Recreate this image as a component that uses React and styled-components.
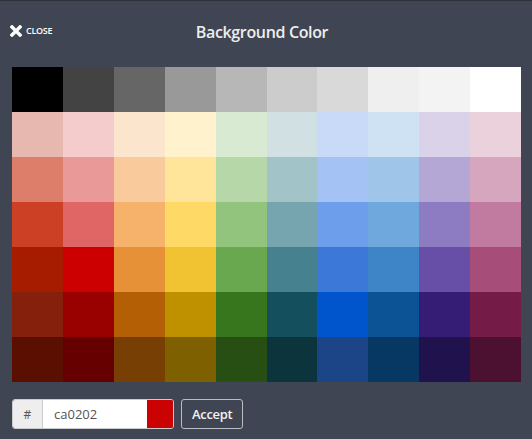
import styled, { createGlobalStyle } from "styled-components";

const GlobalStyle = createGlobalStyle`
  html, body {
    margin: 0;
    padding: 0;
    background: #3f4552;
    font-family: "Open Sans", "Liberation Sans", sans-serif;
  }
  * { box-sizing: border-box; }
`;

const Panel = styled.div`
  width: 532px;
  height: 439px;
  background: #3f4552;
  border-top: 1px solid #2d3139;
  padding: 0 11px 0 12px;
  display: flex;
  flex-direction: column;
`;

const Header = styled.div`
  height: 66px;
  padding-bottom: 4px;
  display: grid;
  grid-template-columns: 1fr auto 1fr;
  align-items: center;
`;

const CloseButton = styled.button`
  justify-self: start;
  display: flex;
  align-items: center;
  gap: 4px;
  margin: -3px 0 0 -2px;
  padding: 0;
  background: none;
  border: none;
  color: #ffffff;
  font-family: "Open Sans", "Liberation Sans", sans-serif;
  font-size: 9px;
  font-weight: 600;
  letter-spacing: -0.3px;
  cursor: pointer;
`;

const Title = styled.h1`
  margin: 0 9px 0 0;
  font-size: 16px;
  font-weight: 600;
  color: #eeeeee;
  letter-spacing: -0.35px;
`;

const Swatches = styled.div`
  width: 509px;
  display: grid;
  grid-template-columns: repeat(10, 1fr);
  grid-auto-rows: 45px;
`;

const Swatch = styled.div`
  background: ${(p) => p.$color};
  cursor: pointer;
`;

const Footer = styled.div`
  margin-top: 17px;
  display: flex;
  align-items: center;
  gap: 7px;
`;

const InputGroup = styled.div`
  display: flex;
  height: 30px;
  border: 1px solid #cccccc;
  border-radius: 3px;
  overflow: hidden;
  width: 162px;
`;

const Addon = styled.span`
  width: 30px;
  display: flex;
  align-items: center;
  justify-content: center;
  background: #eeeeee;
  border-right: 1px solid #cccccc;
  color: #555555;
  font-size: 12px;
`;

const HexInput = styled.input`
  width: 104px;
  border: none;
  outline: none;
  padding: 0 0 0 11px;
  font-family: "Open Sans", "Liberation Sans", sans-serif;
  font-size: 13px;
  color: #555555;
  background: #ffffff;
`;

const Preview = styled.span`
  flex: 1;
  background: ${(p) => p.$color};
`;

const AcceptButton = styled.button`
  height: 30px;
  padding: 0 10px;
  background: transparent;
  border: 1px solid #b9bcc2;
  border-radius: 3px;
  color: #f2f2f2;
  font-family: "Open Sans", "Liberation Sans", sans-serif;
  font-size: 13px;
  font-weight: 600;
  letter-spacing: -0.3px;
  cursor: pointer;
`;

const palette = [
  ["#000000", "#434343", "#666666", "#999999", "#b7b7b7", "#cccccc", "#d9d9d9", "#efefef", "#f3f3f3", "#ffffff"],
  ["#e6b8af", "#f4cccc", "#fce5cd", "#fff2cc", "#d9ead3", "#d0e0e3", "#c9daf8", "#cfe2f3", "#d9d2e9", "#ead1dc"],
  ["#dd7e6b", "#ea9999", "#f9cb9c", "#ffe599", "#b6d7a8", "#a2c4c9", "#a4c2f4", "#9fc5e8", "#b4a7d6", "#d5a6bd"],
  ["#cc4125", "#e06666", "#f6b26b", "#ffd966", "#93c47d", "#76a5af", "#6d9eeb", "#6fa8dc", "#8e7cc3", "#c27ba0"],
  ["#a61c00", "#cc0000", "#e69138", "#f1c232", "#6aa84f", "#45818e", "#3c78d8", "#3d85c6", "#674ea7", "#a64d79"],
  ["#85200c", "#990000", "#b45f06", "#bf9000", "#38761d", "#134f5c", "#0055cc", "#0b5394", "#351c75", "#741b47"],
  ["#5b0f00", "#660000", "#783f04", "#7f6000", "#274e13", "#0c343d", "#1c4587", "#073763", "#20124d", "#4c1130"],
];

const CloseIcon = () => (
  <svg width="12" height="12" viewBox="0 0 12 12">
    <path d="M2 2 L10 10 M10 2 L2 10" stroke="#ffffff" strokeWidth="3.4" strokeLinecap="square" />
  </svg>
);

export default function App() {
  const current = "ca0202";
  return (
    <>
      <GlobalStyle />
      <Panel>
        <Header>
          <CloseButton>
            <CloseIcon />
            CLOSE
          </CloseButton>
          <Title>Background Color</Title>
          <span />
        </Header>
        <Swatches>
          {palette.flat().map((c, i) => (
            <Swatch key={i} $color={c} title={c} />
          ))}
        </Swatches>
        <Footer>
          <InputGroup>
            <Addon>#</Addon>
            <HexInput defaultValue={current} />
            <Preview $color={"#" + current} />
          </InputGroup>
          <AcceptButton>Accept</AcceptButton>
        </Footer>
      </Panel>
    </>
  );
}
